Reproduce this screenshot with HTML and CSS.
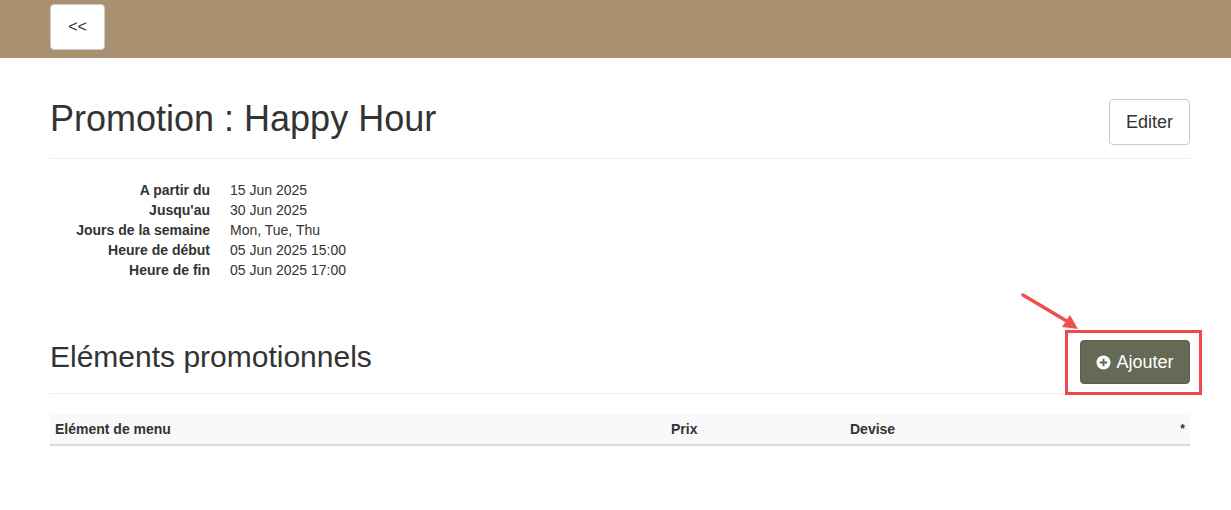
FILE: index.html
```html
<!DOCTYPE html>
<html lang="fr">
<head>
<meta charset="utf-8">
<title>Promotion : Happy Hour</title>
<link rel="stylesheet" href="styles.css">
</head>
<body>
<header class="topbar">
  <div class="container">
    <button class="btn btn-back">&lt;&lt;</button>
  </div>
</header>
<main class="container">
  <div class="page-header">
    <h1>Promotion : Happy Hour</h1>
    <button class="btn btn-lg btn-default">Editer</button>
  </div>
  <dl class="details">
    <dt>A partir du</dt><dd>15 Jun 2025</dd>
    <dt>Jusqu'au</dt><dd>30 Jun 2025</dd>
    <dt>Jours de la semaine</dt><dd>Mon, Tue, Thu</dd>
    <dt>Heure de début</dt><dd>05 Jun 2025 15:00</dd>
    <dt>Heure de fin</dt><dd>05 Jun 2025 17:00</dd>
  </dl>
  <div class="section-header">
    <h2>Eléments promotionnels</h2>
    <div class="add-wrap">
      <button class="btn btn-lg btn-add">
        <svg class="plus" viewBox="0 0 16 16" width="15" height="15"><circle cx="8" cy="8" r="7.5" fill="#fff"/><path d="M7 4h2v3h3v2H9v3H7V9H4V7h3z" fill="#646a55"/></svg>Ajouter
      </button>
      <span class="highlight"></span>
      <svg class="arrow" width="70" height="45" viewBox="0 0 70 45"><line x1="3" y1="3" x2="50" y2="31" stroke="#f0504a" stroke-width="3.5" stroke-linecap="round"/><polygon points="58,37 42,35 50,23" fill="#f0504a"/></svg>
    </div>
  </div>
  <table class="items">
    <thead>
      <tr>
        <th class="c1">Elément de menu</th>
        <th class="c2">Prix</th>
        <th class="c3">Devise</th>
        <th class="c4">*</th>
      </tr>
    </thead>
  </table>
</main>
</body>
</html>
```
FILE: styles.css
```css
* { box-sizing: border-box; }
html, body { margin: 0; padding: 0; background: #fff; }
body {
  font-family: "Liberation Sans", Arial, Helvetica, sans-serif;
  font-size: 14px;
  line-height: 20px;
  color: #333;
}
.container { width: 1140px; margin-left: 50px; }
.topbar { background: #a89070; height: 58px; padding-top: 4px; }
.btn {
  font-family: inherit;
  cursor: pointer;
  border-radius: 4px;
  border: 1px solid #ccc;
  background: #fff;
  color: #333;
}
.btn-back { width: 55px; height: 46px; font-size: 16px; padding: 0; border-color: #ccc; }
.page-header {
  margin-top: 41px;
  display: flex;
  justify-content: space-between;
  align-items: center;
  padding-bottom: 13px;
  border-bottom: 1px solid #eee;
}
h1 { margin: 0 0 6px; font-size: 36px; font-weight: 400; line-height: 40px; color: #333; }
.btn-lg { font-size: 18px; height: 46px; padding: 0 16px; }
.details { margin: 21px 0 0; display: grid; grid-template-columns: 160px 1fr; column-gap: 20px; }
.details dt { font-weight: 700; text-align: right; }
.details dd { margin: 0; }
.section-header {
  margin-top: 60px;
  display: flex;
  justify-content: space-between;
  align-items: flex-end;
  padding-bottom: 9px;
  border-bottom: 1px solid #eee;
}
h2 { margin: 0 0 11px; font-size: 30px; font-weight: 400; line-height: 33px; color: #333; }
.add-wrap { position: relative; }
.btn-add {
  width: 110px; height: 44px;
  background: #646a55; border-color: #5a604c; color: #fff;
  display: flex; align-items: center; justify-content: center; gap: 5px; padding: 0;
}
.plus { display: block; }
.highlight {
  position: absolute; left: -15px; top: -10px; right: -12px; bottom: -11px;
  border: 3px solid #f0474a;
}
.arrow { position: absolute; left: -60px; top: -48px; }
.items { width: 100%; margin-top: 20px; border-collapse: collapse; }
.items th {
  background: #f9f9f9; text-align: left; font-weight: 700;
  padding: 5px 5px; line-height: 20px;
  border-bottom: 2px solid #ddd;
}
.items .c1 { width: 616px; }
.items .c2 { width: 179px; }
.items .c4 { text-align: right; font-size: 12px; }
```
